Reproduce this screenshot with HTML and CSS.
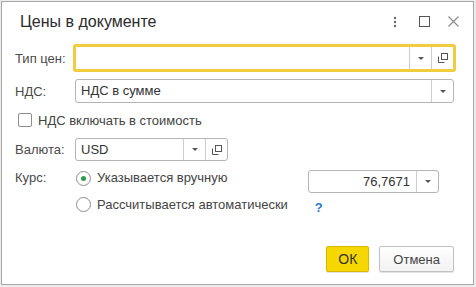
FILE: index.html
```
<!DOCTYPE html>
<html lang="ru">
<head>
  <meta charset="UTF-8" />
  <title>Цены в документе</title>
  <link rel="stylesheet" href="styles.css">
</head>
<body>
  <div class="window">
    <div class="titlebar">
      <h1 class="title">Цены в документе</h1>
      <div class="tools">
        <span class="tool">
          <svg width="4" height="12" viewBox="0 0 4 12"><circle cx="2" cy="2" r="1.2" fill="#666"/><circle cx="2" cy="6" r="1.2" fill="#666"/><circle cx="2" cy="10" r="1.2" fill="#666"/></svg>
        </span>
        <span class="tool">
          <svg width="11" height="11" viewBox="0 0 11 11"><rect x="0.5" y="0.5" width="10" height="10" fill="none" stroke="#555"/></svg>
        </span>
        <span class="tool">
          <svg width="11" height="11" viewBox="0 0 11 11"><path d="M0.5 0.5 L10.5 10.5 M10.5 0.5 L0.5 10.5" stroke="#888" stroke-width="1.1" fill="none"/></svg>
        </span>
      </div>
    </div>

    <div class="form">
      <!-- тип цен -->
      <div class="row row-type">
        <span class="label">Тип цен:</span>
        <div class="field focused">
          <span class="field-value"></span>
          <span class="field-btn"><i class="arrow"></i></span>
          <span class="field-btn">
            <svg width="10" height="10" viewBox="0 0 10 10"><rect x="3.5" y="0.5" width="6" height="6" fill="none" stroke="#555"/><path d="M0.5 3.5 V9.5 H6.5" fill="none" stroke="#555"/></svg>
          </span>
        </div>
      </div>

      <!-- НДС -->
      <div class="row row-vat">
        <span class="label">НДС:</span>
        <div class="field">
          <span class="field-value">НДС в сумме</span>
          <span class="field-btn"><i class="arrow"></i></span>
        </div>
      </div>

      <div class="check-row">
        <span class="checkbox"></span>
        <span>НДС включать в стоимость</span>
      </div>

      <!-- валюта -->
      <div class="row row-currency">
        <span class="label">Валюта:</span>
        <div class="field field-short">
          <span class="field-value">USD</span>
          <span class="field-btn"><i class="arrow"></i></span>
          <span class="field-btn">
            <svg width="10" height="10" viewBox="0 0 10 10"><rect x="3.5" y="0.5" width="6" height="6" fill="none" stroke="#555"/><path d="M0.5 3.5 V9.5 H6.5" fill="none" stroke="#555"/></svg>
          </span>
        </div>
      </div>

      <!-- курс -->
      <div class="row row-rate">
        <span class="label label-top">Курс:</span>
        <div class="options">
          <div class="option option-first">
            <span class="radio checked"></span>
            <span>Указывается вручную</span>
            <div class="field field-rate">
              <span class="field-value num">76,7671</span>
              <span class="field-btn"><i class="arrow"></i></span>
            </div>
          </div>
          <div class="option">
            <span class="radio"></span>
            <span>Рассчитывается автоматически</span>
            <span class="help">?</span>
          </div>
        </div>
      </div>
    </div>

    <div class="footer">
      <button class="btn btn-ok">ОК</button>
      <button class="btn">Отмена</button>
    </div>
  </div>
</body>
</html>
```

FILE: styles.css
```
body {
  margin: 0;
  background: #ececec;
  font-family: "Liberation Sans", Arial, sans-serif;
  font-size: 13px;
  color: #333;
}

.window {
  width: 473px;
  height: 284px;
  box-sizing: border-box;
  margin: 1px 0 0 1px;
  background: #fff;
  border: 1px solid #a8a8a8;
  display: flex;
  flex-direction: column;
}

.titlebar {
  display: flex;
  align-items: center;
  height: 39px;
  padding: 0 12px 0 18px;
}

.title {
  margin: 0;
  font-size: 16px;
  font-weight: normal;
  color: #2b2b2b;
  flex: 1;
}

.tools {
  display: flex;
  gap: 13px;
}

.tool {
  width: 16px;
  height: 16px;
  display: flex;
  align-items: center;
  justify-content: center;
}

.form {
  padding: 0 19px 0 13px;
}

.row {
  display: grid;
  grid-template-columns: 60px 1fr;
  align-items: center;
}

.label {
  color: #4a4a4a;
}

.label-top {
  align-self: start;
  line-height: 20px;
}

.row-type {
  margin-top: 5px;
}

.row-vat {
  margin-top: 9px;
}

.row-currency {
  margin-top: 8px;
}

.row-rate {
  margin-top: 7px;
  align-items: start;
}

.field {
  display: flex;
  height: 24px;
  box-sizing: border-box;
  border: 1px solid #b5b5b5;
  border-radius: 3px;
  background: #fff;
}

.field.focused {
  border-color: #f0cc3e;
  box-shadow: 0 0 0 2px #f0cc3e;
  border-radius: 1px;
}

.field-short {
  width: 153px;
  height: 23px;
}

.field-value {
  flex: 1;
  padding: 0 5px;
  line-height: 22px;
  font-size: 13px;
  color: #333;
}

.field-value.num {
  text-align: right;
  padding-right: 6px;
}

.field-btn {
  width: 21px;
  border-left: 1px solid #cdcdcd;
  display: flex;
  align-items: center;
  justify-content: center;
}

.arrow {
  width: 0;
  height: 0;
  border-left: 3px solid transparent;
  border-right: 3px solid transparent;
  border-top: 3px solid #555;
}

.check-row {
  display: flex;
  align-items: center;
  gap: 6px;
  height: 20px;
  margin-top: 7px;
  padding-left: 3px;
  color: #444;
}

.checkbox {
  width: 12px;
  height: 12px;
  border: 1px solid #8e8e8e;
  border-radius: 2px;
}

.options {
  display: flex;
  flex-direction: column;
  gap: 1px;
  padding-left: 1px;
}

.option {
  display: flex;
  align-items: center;
  gap: 6px;
  height: 20px;
  color: #444;
}

.option-first {
  align-items: flex-start;
  height: 25px;
  line-height: 20px;
}

.option-first .radio {
  margin-top: 3px;
}

.radio {
  width: 15px;
  height: 15px;
  border: 1px solid #8e8e8e;
  border-radius: 50%;
  box-sizing: border-box;
  display: flex;
  align-items: center;
  justify-content: center;
}

.radio.checked::after {
  content: "";
  width: 5px;
  height: 5px;
  border-radius: 50%;
  background: #2f9b4a;
}

.field-rate {
  width: 131px;
  height: 23px;
  margin: 2px 15px 0 auto;
}

.help {
  margin: 6px 0 0 21px;
  color: #2f78c4;
  font-weight: bold;
  font-size: 13px;
}

.footer {
  margin-top: auto;
  display: flex;
  justify-content: flex-end;
  gap: 10px;
  padding: 0 19px 12px 0;
}

.btn {
  height: 26px;
  padding: 0 13px;
  font-family: "Liberation Sans", Arial, sans-serif;
  font-size: 13px;
  color: #444;
  background: linear-gradient(#ffffff, #f2f2f2);
  border: 1px solid #c2c2c2;
  border-radius: 2px;
  box-shadow: 0 1px 1px rgba(0, 0, 0, 0.12);
}

.btn-ok {
  width: 43px;
  padding: 0;
  font-size: 14px;
  color: #333;
  background: #f7d700;
  border-color: #d8b800;
}
```
